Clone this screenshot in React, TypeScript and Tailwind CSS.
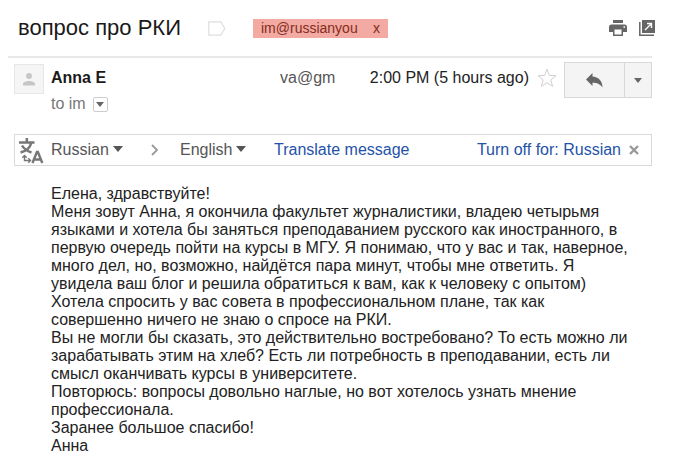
import type { ReactNode } from "react";

const paragraphs: string[][] = [
  ["Елена, здравствуйте!"],
  [
    "Меня зовут Анна, я окончила факультет журналистики, владею четырьмя",
    "языками и хотела бы заняться преподаванием русского как иностранного, в",
    "первую очередь пойти на курсы в МГУ. Я понимаю, что у вас и так, наверное,",
    "много дел, но, возможно, найдётся пара минут, чтобы мне ответить. Я",
    "увидела ваш блог и решила обратиться к вам, как к человеку с опытом)",
  ],
  [
    "Хотела спросить у вас совета в профессиональном плане, так как",
    "совершенно ничего не знаю о спросе на РКИ.",
  ],
  [
    "Вы не могли бы сказать, это действительно востребовано? То есть можно ли",
    "зарабатывать этим на хлеб? Есть ли потребность в преподавании, есть ли",
    "смысл оканчивать курсы в университете.",
  ],
  [
    "Повторюсь: вопросы довольно наглые, но вот хотелось узнать мнение",
    "профессионала.",
  ],
  ["Заранее большое спасибо!"],
  ["Анна"],
];

function Caret({ className }: { className: string }) {
  return (
    <svg viewBox="0 0 10 6" className={className} fill="currentColor" aria-hidden="true">
      <path d="M0 0h10L5 6z" />
    </svg>
  );
}

function LanguageSelect({ label, value, className }: { label: string; value: string; className: string }) {
  return (
    <span className={`flex items-center ${className}`}>
      <select
        aria-label={label}
        defaultValue={value}
        className="-mr-3 w-full appearance-none bg-transparent pr-3 text-base leading-5 text-[#555]"
      >
        <option>{value}</option>
      </select>
      <Caret className="pointer-events-none mb-0.5 h-[6px] w-[10px] shrink-0 text-[#555]" />
    </span>
  );
}

function IconButton({ label, className, children }: { label: string; className: string; children: ReactNode }) {
  return (
    <button type="button" aria-label={label} className={`flex shrink-0 items-center justify-center ${className}`}>
      {children}
    </button>
  );
}

export default function App() {
  return (
    <main className="min-h-screen bg-white pr-[38px] pl-2 font-['Liberation_Sans',Arial,sans-serif] text-base text-[#222]">
      <header className="border-b-2 border-[#e8e8e8]">
        <div className="-mr-[3px] flex h-14 items-center pl-[10px]">
          <h1 className="text-[22px] leading-7 text-[#1a1a1a]">вопрос про РКИ</h1>
          <IconButton label="Mark as important" className="ml-[27px]">
            <svg viewBox="0 0 18 15" className="h-[15px] w-[18px]" fill="none" stroke="#dedede" strokeWidth="1.2">
              <path d="M.8.8h12l4 6.7-4 6.7H.8z" />
            </svg>
          </IconButton>
          <span className="ml-[27px] flex h-[19px] w-[135px] items-center justify-between bg-[#f2aaa2] px-2 text-sm leading-[18px] text-[#862c20]">
            im@russianyou
            <button type="button" aria-label="Remove label">x</button>
          </span>
          <IconButton label="Print all" className="ml-auto">
            <svg viewBox="0 0 18 16" className="h-4 w-[18px]" fill="#666" aria-hidden="true">
              <path d="M4 0h10v3H4z" />
              <path
                fillRule="evenodd"
                d="M2.5 4.5h13A2.5 2.5 0 0 1 18 7v5h-4v4H4v-4H0V7a2.5 2.5 0 0 1 2.5-2.5zM5.5 9.500v5h7v-5zM14.500 6.200v1.600h1.600V6.200z"
              />
            </svg>
          </IconButton>
          <IconButton label="In new window" className="ml-3">
            <svg viewBox="0 0 16 16" className="h-4 w-4" aria-hidden="true">
              <path d="M3 0h13v13H3z" fill="#666" />
              <path d="M.8 2v13.200H15" fill="none" stroke="#666" strokeWidth="1.500" />
              <path d="M6 10l6-6M8 3.500h4.500V8" fill="none" stroke="#fff" strokeWidth="1.400" />
            </svg>
          </IconButton>
        </div>
      </header>

      <section className="flex items-start pt-1 pl-1.5">
        <div className="mt-0.5 flex size-[30px] shrink-0 items-center justify-center border border-[#e6e6e6] bg-[#f5f5f5]">
          <svg viewBox="0 0 12 13" className="h-[13px] w-3" fill="#c6c6c6" aria-hidden="true">
            <circle cx="6" cy="3" r="2.900" />
            <path d="M0 12.500v-1.500C0 9 3.500 8 6 8s6 1 6 3v1.500z" />
          </svg>
        </div>
        <div className="ml-[7px] grow pt-1.5">
          <div className="flex items-center leading-5">
            <strong className="w-[229px] text-[#1a1a1a]">Anna E</strong>
            <span className="text-[#555]">va@gm</span>
            <time className="ml-auto">2:00 PM (5 hours ago)</time>
          </div>
          <div className="mt-1.5 flex items-center leading-5 text-[#777]">
            to im
            <IconButton label="Show details" className="ml-[7px] size-[15px] rounded-xs border border-[#ccc] bg-white">
              <Caret className="h-[5px] w-2 text-[#666]" />
            </IconButton>
          </div>
        </div>
        <IconButton label="Star" className="mt-1.5 ml-2">
          <svg viewBox="0 0 20 20" className="size-5" fill="none" stroke="#d0d0d0" aria-hidden="true">
            <path d="M10 1.200l2.300 6.200 6.700.3-5.200 4.200 1.800 6.500-5.600-3.700-5.600 3.700 1.800-6.500L1 7.700l6.700-.3z" />
          </svg>
        </IconButton>
        <div className="ml-[7px] flex h-9 w-[88px] shrink-0 border border-[#d8d8d8] bg-[#f4f4f4] text-[#666]">
          <IconButton label="Reply" className="grow">
            <svg viewBox="0 0 17 15" className="h-[15px] w-[17px]" fill="currentColor" aria-hidden="true">
              <path d="M6.500 0v3.600C12 4 16.500 7.500 16.500 14.500 14 11 11 9.800 6.500 9.800V13L0 6.500z" />
            </svg>
          </IconButton>
          <IconButton label="More" className="w-[27px] border-l border-[#d8d8d8]">
            <Caret className="h-[5px] w-2" />
          </IconButton>
        </div>
      </section>

      <section className="mt-5 ml-1.5 flex h-8 items-center border border-[#d9d9d9] pr-3 pl-1">
        <svg viewBox="0 0 25 27" className="h-[27px] w-[25px] shrink-0" fill="none" stroke="#777" aria-hidden="true">
          <path d="M0 5.500h15.500M7.800 1v4.500M3 8.500c2 3.500 5 5.500 9.500 7M12 6.500c-1 4.500-5 7.500-10.500 9" strokeWidth="2.500" />
          <path d="M5.500 18.500v5h6M3.300 20.700l2.200-2.200 2.200 2.200M9.300 21.300l2.200 2.200-2.200 2.200" strokeWidth="1.400" />
          <path d="M13.500 26l4.400-11h1l4.400 11M15 22.500h7" strokeWidth="2.400" />
        </svg>
        <LanguageSelect label="Translate from" value="Russian" className="ml-[7px] w-[74px]" />
        <svg viewBox="0 0 7 12" className="ml-[26px] h-3 w-[7px] shrink-0" fill="none" stroke="#999" strokeWidth="1.800" aria-hidden="true">
          <path d="M1 1l5 5-5 5" />
        </svg>
        <LanguageSelect label="Translate to" value="English" className="ml-[22px] w-[68px]" />
        <a href="#translate" className="ml-[26px] leading-5 text-[#2452a8]">Translate message</a>
        <a href="#turn-off" className="ml-auto leading-5 text-[#2452a8]">Turn off for: Russian</a>
        <IconButton label="Close" className="ml-2">
          <svg viewBox="0 0 10 10" className="size-[10px]" fill="none" stroke="#999" strokeWidth="2.400" aria-hidden="true">
            <path d="M1 1l8 8M9 1l-8 8" />
          </svg>
        </IconButton>
      </section>

      <article className="mt-[19px] ml-[43px] leading-[18px] whitespace-nowrap">
        {paragraphs.map((lines) => (
          <p key={lines[0]}>
            {lines.map((line) => (
              <span key={line} className="block">{line}</span>
            ))}
          </p>
        ))}
      </article>
    </main>
  );
}
